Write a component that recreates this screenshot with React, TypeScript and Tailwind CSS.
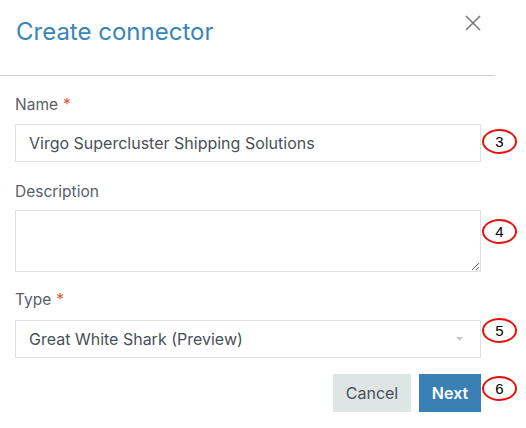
import React from "react";

function Marker({ n, className }: { n: number; className?: string }) {
  return (
    <div
      className={`ml-[1px] w-[35px] h-[25px] rounded-[50%] border-2 border-[#e8100c] flex items-center justify-center text-[15px] leading-none text-black shrink-0 ${className ?? ""}`}
      style={{ fontFamily: '"Liberation Sans", Arial, sans-serif' }}
    >
      {n}
    </div>
  );
}

function Label({ text, required }: { text: string; required?: boolean }) {
  return (
    <div className="text-[15.5px] leading-[20px] text-[#5b6068]">
      {text}
      {required && <span className="ml-[5px] text-[#e4572e]">*</span>}
    </div>
  );
}

export default function App() {
  return (
    <div className="w-[526px] h-[428px] bg-white overflow-hidden" style={{ fontFamily: "Inter, 'Noto Sans', sans-serif" }}>
      <div className="w-[495px] h-[76px] border-b border-[#cfcfcf] flex justify-between">
        <h1 className="pl-[16px] pt-[17px] text-[24px] leading-[30px] font-normal text-[#3a85b8]">Create connector</h1>
        <button className="mt-[15px] mr-[14px] w-[16px] h-[16px]">
          <svg viewBox="0 0 16 16" width="16" height="16" fill="none" stroke="#7b7b7b" strokeWidth="1.6">
            <path d="M1 1 L15 15 M15 1 L1 15" />
          </svg>
        </button>
      </div>

      <div className="pl-[15px] pt-[19px]">
        <Label text="Name" required />
        <div className="mt-[9px] flex items-start">
          <div className="w-[466px] h-[38px] border border-[#dde3e3] flex items-center pl-[13px] text-[16px] text-[#4a4f57]">
            Virgo Supercluster Shipping Solutions
          </div>
          <Marker n={3} className="mt-[5px]" />
        </div>

        <div className="mt-[20px]">
          <Label text="Description" />
        </div>
        <div className="mt-[8px] flex items-start">
          <textarea className="w-[466px] h-[62px] border border-[#dde3e3] outline-none block" />
          <Marker n={4} className="mt-[9px]" />
        </div>

        <div className="mt-[18px]">
          <Label text="Type" required />
        </div>
        <div className="mt-[10px] flex items-start">
          <div className="w-[466px] h-[38px] border border-[#dde3e3] flex items-center justify-between pl-[13px] pr-[17px] text-[16px] text-[#4a4f57]">
            <span>Great White Shark (Preview)</span>
            <svg width="7" height="4" viewBox="0 0 7 4">
              <path d="M0 0 H7 L3.5 4 Z" fill="#c9c9c9" />
            </svg>
          </div>
          <Marker n={5} className="-mt-[2px]" />
        </div>

        <div className="mt-[16px] flex items-start">
          <div className="w-[466px] flex justify-end gap-[8px]">
            <button className="w-[78px] h-[38px] bg-[#dee5e5] text-[16px] text-[#4a505a]">Cancel</button>
            <button className="w-[62px] h-[38px] bg-[#3a80b4] text-[16px] font-semibold text-white">Next</button>
          </div>
          <Marker n={6} className="mt-[2px]" />
        </div>
      </div>
    </div>
  );
}
